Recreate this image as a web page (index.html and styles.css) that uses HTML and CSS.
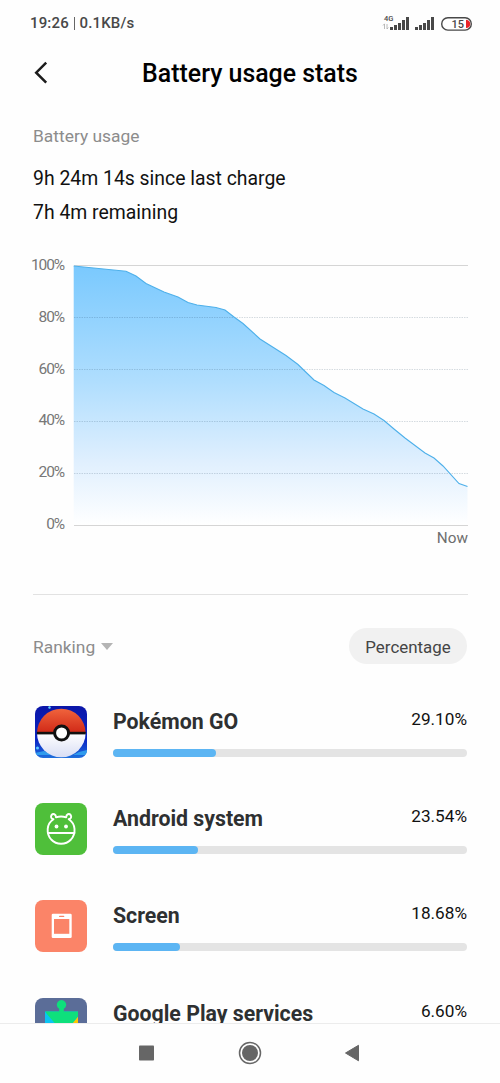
FILE: index.html
```html
<!DOCTYPE html>
<html lang="en">
<head>
    <meta charset="UTF-8">
    <title>Battery usage stats</title>
    <link rel="stylesheet" href="styles.css">
</head>
<body>
    <div class="status-bar">
        <span class="status-text">19:26 <i class="status-divider"></i> 0.1KB/s</span>
        <svg class="status-icons" width="92" height="20" viewBox="0 0 92 20">
            <text x="2" y="8" class="network-label">4G</text>
            <path d="M2.5 16v-5M1 12.5l1.5-1.7M5 11v5l1.3-1.5" fill="none" stroke="#aaa" stroke-width="0.8"/>
            <g fill="#484848">
                <rect x="8" y="14" width="3" height="3"/>
                <rect x="12" y="12" width="3" height="5"/>
                <rect x="16" y="10" width="3" height="7"/>
                <rect x="20" y="7" width="3" height="10"/>
                <rect x="24" y="4" width="3" height="13"/>
                <rect x="33" y="14" width="3" height="3"/>
                <rect x="37" y="12" width="3" height="5"/>
                <rect x="41" y="10" width="3" height="7"/>
                <rect x="45" y="7" width="3" height="10"/>
                <rect x="49" y="4" width="3" height="13"/>
            </g>
            <rect x="59.7" y="4.7" width="29.6" height="12.4" rx="6.2" fill="#fff" stroke="#484848" stroke-width="1.4"/>
            <path d="M84 6.700c3.200.4 4.200 2 4.200 4.200s-1 3.800-4.200 4.200z" fill="#e8252b"/>
            <text x="69.500" y="14.900" class="battery-label">15</text>
        </svg>
    </div>

    <div class="header">
        <svg class="back-icon" width="16" height="24" viewBox="0 0 16 24">
            <path d="M13.200 1.700L3.200 11.700l10 10" fill="none" stroke="#1c1c1c" stroke-width="2.500"/>
        </svg>
        <h1 class="title">Battery usage stats</h1>
    </div>

    <div class="content">
        <div class="summary">
            <p class="caption">Battery usage</p>
            <p class="summary-line">9h 24m 14s since last charge</p>
            <p class="summary-line">7h 4m remaining</p>
        </div>

        <div class="chart">
            <div class="chart-labels">
                <span>100%</span>
                <span>80%</span>
                <span>60%</span>
                <span>40%</span>
                <span>20%</span>
                <span>0%</span>
            </div>
            <div class="chart-plot">
                <svg width="395" height="261" viewBox="0 0 395 261">
                    <defs>
                        <linearGradient id="fill" x1="0" y1="0" x2="0" y2="1">
                            <stop offset="0" stop-color="#7ac9fe"/>
                            <stop offset="0.45" stop-color="#b0defe"/>
                            <stop offset="0.75" stop-color="#dfeffe"/>
                            <stop offset="1" stop-color="#fff"/>
                        </linearGradient>
                    </defs>
                    <path class="line-solid" d="M1 0.500H395"/>
                    <path d="M0.700 1L53 6.300L63 11L73 18.500L91 27L105 32L115 37.500L124 40L143 42.500L152 45L161 52L170 58.500L187 74L213 90.500L225 99.500L241 115L251 120.500L261 127.500L272 133L290 144L301 149L311 155.500L321 164L332 173L352 188L361 193L370 201L386 218.500L394.500 221.500V260H0.700Z" fill="url(#fill)"/>
                    <path class="line-dotted" d="M1 52.500H395M1 104.500H395M1 156.500H395M1 208.500H395"/>
                    <path d="M0.700 1L53 6.300L63 11L73 18.500L91 27L105 32L115 37.500L124 40L143 42.500L152 45L161 52L170 58.500L187 74L213 90.500L225 99.500L241 115L251 120.500L261 127.500L272 133L290 144L301 149L311 155.500L321 164L332 173L352 188L361 193L370 201L386 218.500L394.500 221.500" fill="none" stroke="#4eb0ea" stroke-width="1.100"/>
                    <path class="line-solid" d="M1 260.500H395"/>
                </svg>
                <div class="chart-now">Now</div>
            </div>
        </div>

        <div class="ranking-bar">
            <span class="ranking">Ranking <i class="arrow-down"></i></span>
            <button class="percentage-button">Percentage</button>
        </div>

        <div class="app-list">
            <div class="app">
                <svg class="app-icon" width="52" height="52" viewBox="0 0 52 52">
                    <defs>
                        <linearGradient id="red" x1="0" y1="0" x2="0" y2="1">
                            <stop offset="0" stop-color="#f0643c"/>
                            <stop offset="1" stop-color="#d02817"/>
                        </linearGradient>
                        <linearGradient id="sky" x1="0" y1="0" x2="0" y2="1">
                            <stop offset="0" stop-color="#0b16a8"/>
                            <stop offset="0.65" stop-color="#0925c4"/>
                            <stop offset="1" stop-color="#1f6fdc"/>
                        </linearGradient>
                        <linearGradient id="ball" x1="0" y1="0" x2="0" y2="1">
                            <stop offset="0" stop-color="#fff"/>
                            <stop offset="1" stop-color="#d9def4"/>
                        </linearGradient>
                    </defs>
                    <rect width="52" height="52" fill="url(#sky)"/>
                    <path d="M0 47l9-2 8 4H0zM52 44l-8 2-6 3h14z" fill="#2f9bed"/>
                    <circle cx="14.500" cy="1.500" r="1.200" fill="#62d5ff"/>
                    <circle cx="2.500" cy="42" r="1.500" fill="#5ccaff"/>
                    <path d="M2 27a24.300 24.300 0 0 1 48.600 0z" fill="url(#red)"/>
                    <path d="M2 27a24.300 24.300 0 0 0 48.600 0z" fill="url(#ball)"/>
                    <rect x="1.800" y="25.800" width="49" height="2.600" fill="#111"/>
                    <circle cx="26.600" cy="27" r="7" fill="#fff" stroke="#111" stroke-width="3"/>
                </svg>
                <div class="app-info">
                    <div class="app-row">
                        <span class="app-name">Pokémon GO</span>
                        <span class="app-value">29.10%</span>
                    </div>
                    <div class="bar"><div class="bar-fill" style="width: 29.1%"></div></div>
                </div>
            </div>

            <div class="app">
                <svg class="app-icon" width="52" height="52" viewBox="0 0 52 52">
                    <rect width="52" height="52" fill="#4fbf3a"/>
                    <g fill="none" stroke="#fff" stroke-width="1.900" stroke-linejoin="round" stroke-linecap="round">
                        <path d="M18.500 16.300c-2.500-.5-3-2.700-2-4.200 1.500-2 4.600-1 4.500 2.200 3.200-1 7-1 10.200 0-.1-3.200 3-4.200 4.500-2.200 1 1.500.5 3.700-2 4.200 7.200 4.500 7.500 14.200 2.300 20.200-5.300 5.700-14.500 5.700-19.800 0-5.200-6-4.900-15.700 2.300-20.200z"/>
                        <path d="M13 30h26.500"/>
                    </g>
                    <circle cx="21.500" cy="23.500" r="1.900" fill="#fff"/>
                    <circle cx="31" cy="23.500" r="1.900" fill="#fff"/>
                </svg>
                <div class="app-info">
                    <div class="app-row">
                        <span class="app-name">Android system</span>
                        <span class="app-value">23.54%</span>
                    </div>
                    <div class="bar"><div class="bar-fill" style="width: 23.9%"></div></div>
                </div>
            </div>

            <div class="app">
                <svg class="app-icon" width="52" height="52" viewBox="0 0 52 52">
                    <rect width="52" height="52" fill="#fb8468"/>
                    <path d="M18 13.800h17.400a1.300 1.300 0 0 1 1.300 1.300v21.700a1.300 1.300 0 0 1-1.300 1.300H18a1.300 1.300 0 0 1-1.300-1.300V15.100a1.300 1.300 0 0 1 1.300-1.300z" fill="#fff"/>
                    <rect x="19" y="19" width="15.300" height="14.800" fill="#fb8468"/>
                    <rect x="24" y="15.700" width="5.300" height="1.400" rx="0.700" fill="#fb8468"/>
                </svg>
                <div class="app-info">
                    <div class="app-row">
                        <span class="app-name">Screen</span>
                        <span class="app-value">18.68%</span>
                    </div>
                    <div class="bar"><div class="bar-fill" style="width: 19%"></div></div>
                </div>
            </div>

            <div class="app">
                <svg class="app-icon" width="52" height="52" viewBox="0 0 52 52">
                    <rect width="52" height="52" fill="#5b6d98"/>
                    <rect x="10" y="13.500" width="33" height="33" fill="#00c3ef"/>
                    <path d="M43 18.500v28H20z" fill="#fdc700"/>
                    <path d="M10 13.500h14.200v-2.700a4.700 4.700 0 1 1 4.600 0v2.700H43v5L27 38z" fill="#0ee07c"/>
                    <path d="M10 14l21 24L10 47z" fill="#0bc4f2"/>
                </svg>
                <div class="app-info">
                    <div class="app-row">
                        <span class="app-name">Google Play services</span>
                        <span class="app-value">6.60%</span>
                    </div>
                    <div class="bar"><div class="bar-fill" style="width: 6.6%"></div></div>
                </div>
            </div>
        </div>
    </div>

    <div class="nav-bar">
        <svg width="220" height="24" viewBox="0 0 220 24">
            <rect x="-1" y="4.500" width="15" height="15" rx="0.800" fill="#666"/>
            <circle cx="110" cy="12" r="10.500" fill="none" stroke="#666" stroke-width="1.500"/>
            <circle cx="110" cy="12" r="8" fill="#666"/>
            <path d="M205.500 12l13-7.700v15.500z" fill="#666" stroke="#666" stroke-width="1" stroke-linejoin="round"/>
        </svg>
    </div>
</body>
</html>
```

FILE: styles.css
```css
* {
    box-sizing: border-box;
}
body {
    margin: 0;
    height: 1083px;
    display: flex;
    flex-direction: column;
    overflow: hidden;
    background-color: #fefefe;
    color: #111;
    font-family: Roboto, 'Liberation Sans', sans-serif;
}
svg {
    display: block;
}
p, h1 {
    margin: 0;
}
.status-bar {
    height: 44px;
    flex: none;
    display: flex;
    align-items: center;
    justify-content: space-between;
    padding: 1px 26px 0 30px;
}
.status-text {
    font-size: 15px;
    font-weight: 500;
    letter-spacing: 0.15px;
    color: #484848;
    white-space: nowrap;
}
.status-divider {
    display: inline-block;
    width: 1px;
    height: 13px;
    margin: 0 1px;
    background-color: #666;
    vertical-align: -2px;
}
.network-label {
    font-size: 7.5px;
    font-weight: 500;
    fill: #484848;
}
.battery-label {
    font-size: 11px;
    font-weight: 500;
    fill: #484848;
}
.header {
    height: 58px;
    flex: none;
    display: grid;
    grid-template-columns: 32px 1fr 32px;
    align-items: center;
    padding: 0 31px 0 33px;
}
.title {
    font-size: 24.9px;
    font-weight: 500;
    color: #000;
    text-align: center;
    white-space: nowrap;
    margin-left: -2px;
}
.content {
    flex: 1;
    min-height: 0;
    overflow: hidden;
    padding: 17px 32px 0 33px;
}
.summary {
    line-height: 34px;
}
.caption {
    font-size: 17.4px;
    color: #8c8c8c;
    margin-bottom: 9px;
}
.summary-line {
    font-size: 19.4px;
}
.chart {
    display: flex;
    padding-top: 25px;
    height: 365px;
    border-bottom: 1px solid #e2e2e2;
}
.chart-labels {
    width: 40px;
    height: 279px;
    padding-right: 9px;
    display: flex;
    flex-direction: column;
    justify-content: space-between;
    align-items: flex-end;
    font-size: 15.5px;
    letter-spacing: -1.1px;
    line-height: 20px;
    color: #777;
}
.chart-plot {
    padding-top: 10px;
}
.line-solid {
    stroke: #d5d5d5;
}
.line-dotted {
    stroke: #0a324b;
    stroke-opacity: 0.17;
    stroke-dasharray: 1.5 1;
}
.chart-now {
    font-size: 15.3px;
    line-height: 24px;
    text-align: right;
    color: #6e6e6e;
}
.ranking-bar {
    display: flex;
    align-items: center;
    justify-content: space-between;
    margin-top: 33px;
    padding-right: 1px;
}
.ranking {
    font-size: 17.4px;
    line-height: 20px;
    padding-top: 2px;
    color: #8c8c8c;
}
.arrow-down {
    display: inline-block;
    margin-left: 1px;
    border: 6.5px solid transparent;
    border-top: 7px solid #b4b4b4;
    border-bottom: 0;
    vertical-align: 3px;
}
.percentage-button {
    width: 118px;
    height: 36px;
    padding: 1px 0 0;
    border: none;
    border-radius: 18px;
    background-color: #f1f1f1;
    color: #454545;
    font-family: inherit;
    font-size: 16.9px;
}
.app-list {
    margin-top: 42px;
    padding: 0 1px 0 2px;
}
.app {
    display: flex;
    gap: 26px;
    height: 97.2px;
}
.app-icon {
    flex: none;
    border-radius: 8px;
}
.app-info {
    flex: 1;
}
.app-row {
    display: flex;
    justify-content: space-between;
    height: 43px;
}
.app-name {
    font-size: 21.3px;
    font-weight: 700;
    line-height: 31px;
    color: #2e3031;
}
.app-value {
    font-size: 17.2px;
    line-height: 27px;
}
.bar {
    height: 7.5px;
    border-radius: 4px;
    background-color: #e4e4e4;
}
.bar-fill {
    height: 100%;
    border-radius: 4px;
    background-color: #5cb5f3;
}
.nav-bar {
    height: 60px;
    flex: none;
    display: flex;
    align-items: center;
    justify-content: center;
    padding-bottom: 2px;
    border-top: 1px solid #ececec;
}
.nav-bar svg {
    overflow: visible;
}
```
